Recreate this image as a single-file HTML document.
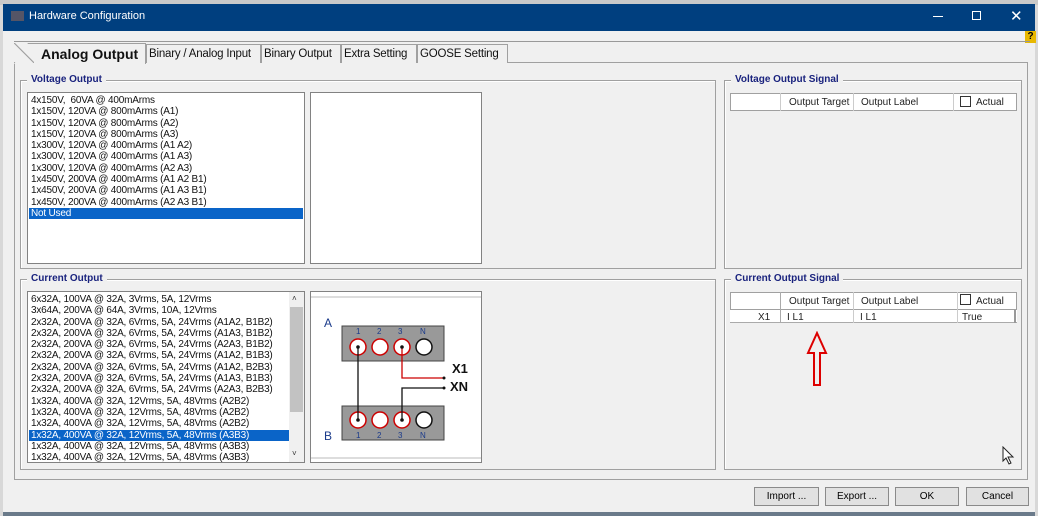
<!DOCTYPE html><html><head><style>
*{margin:0;padding:0;box-sizing:border-box}
body{width:1038px;height:516px;overflow:hidden;background:#d8d8d8;font-family:"Liberation Sans",sans-serif;position:relative}
.a{position:absolute}
.grp{position:absolute;border:1px solid #a0a0a0;box-shadow:inset 1px 1px #fff}
.gl{position:absolute;top:-7px;left:6px;background:#f0f0f0;color:#1a237e;font-weight:bold;font-size:10px;padding:0 4px}
.list{position:absolute;background:#fff;border:1px solid #828282;font-size:10px;line-height:11.3px;color:#111;padding:2px 1px;white-space:nowrap;overflow:hidden;letter-spacing:-0.2px}
.list div{padding-left:2px}
.sel{background:#0a64c8;color:#fff}
.tab{position:absolute;top:44px;height:19px;border:1px solid #a0a0a0;border-bottom:none;background:#f0f0f0;font-size:11.5px;padding:3px 2px;color:#111;white-space:nowrap;overflow:hidden;letter-spacing:-0.2px}
.btn{position:absolute;top:487px;height:19px;border:1px solid #8a8a8a;background:#e1e1e1;font-size:10px;text-align:center;line-height:17px}
.hdr{position:absolute;font-size:10px;color:#222;white-space:nowrap}
</style></head><body>
<div class="a" style="left:0;top:0;width:1038px;height:5px;background:#c9c9c9"></div>
<div class="a" style="left:3px;top:4px;width:1032px;height:512px;background:#f0f0f0"></div>
<div class="a" style="left:3px;top:4px;width:1032px;height:27px;background:#003f7f"></div>
<div class="a" style="left:11px;top:11px;width:13px;height:10px;background:#556"></div>
<div class="a" style="left:29px;top:10px;color:#fff;font-size:11px">Hardware Configuration</div>
<div class="a" style="left:933px;top:16px;width:10px;height:1px;background:#fff"></div>
<div class="a" style="left:972px;top:11px;width:9px;height:9px;border:1px solid #fff"></div>
<div class="a" style="left:1010px;top:7px;color:#fff;font-size:15px">✕</div>
<div class="a" style="left:1025px;top:31px;width:11px;height:12px;background:#e8b800;font-size:10px;font-weight:bold;text-align:center">?</div>
<div class="a" style="left:14px;top:41px;width:1016px;height:1px;background:#999"></div>
<div class="a" style="left:14px;top:62px;width:1014px;height:418px;border:1px solid #a0a0a0;background:#f0f0f0"></div>
<div class="a" style="left:14px;top:43px;width:132px;height:21px;background:#f0f0f0;border-top:1px solid #a0a0a0;border-right:1px solid #a0a0a0;clip-path:polygon(14px 0,100% 0,100% 100%,0 100%)"></div>
<div class="a" style="left:14px;top:43px;width:20px;height:20px;background:linear-gradient(to top right,transparent 48%,#a0a0a0 49%,#a0a0a0 52%,transparent 53%)"></div>
<div class="a" style="left:41px;top:46px;font-size:14px;font-weight:bold;color:#111;white-space:nowrap">Analog Output</div>
<div class="tab" style="left:146px;width:115px">Binary / Analog Input</div>
<div class="tab" style="left:261px;width:80px">Binary Output</div>
<div class="tab" style="left:341px;width:76px">Extra Setting</div>
<div class="tab" style="left:417px;width:91px">GOOSE Setting</div>

<div class="grp" style="left:20px;top:80px;width:696px;height:189px"><div class="gl">Voltage Output</div></div>
<div class="list" style="left:27px;top:92px;width:278px;height:172px">
<div>4x150V,&nbsp; 60VA @ 400mArms</div><div>1x150V, 120VA @ 800mArms (A1)</div><div>1x150V, 120VA @ 800mArms (A2)</div><div>1x150V, 120VA @ 800mArms (A3)</div><div>1x300V, 120VA @ 400mArms (A1 A2)</div><div>1x300V, 120VA @ 400mArms (A1 A3)</div><div>1x300V, 120VA @ 400mArms (A2 A3)</div><div>1x450V, 200VA @ 400mArms (A1 A2 B1)</div><div>1x450V, 200VA @ 400mArms (A1 A3 B1)</div><div>1x450V, 200VA @ 400mArms (A2 A3 B1)</div><div class="sel">Not Used</div></div>
<div class="a" style="left:310px;top:92px;width:172px;height:172px;background:#fff;border:1px solid #828282"></div>

<div class="grp" style="left:724px;top:80px;width:298px;height:189px"><div class="gl">Voltage Output Signal</div></div>
<div class="a" style="left:730px;top:93px;width:287px;height:18px;background:#fff;border:1px solid #a0a0a0"></div>
<div class="a" style="left:780px;top:93px;width:1px;height:18px;background:#ccc"></div>
<div class="a" style="left:853px;top:93px;width:1px;height:18px;background:#ccc"></div>
<div class="a" style="left:953px;top:93px;width:1px;height:18px;background:#ccc"></div>
<div class="hdr" style="left:789px;top:97px">Output Target</div>
<div class="hdr" style="left:861px;top:97px">Output Label</div>
<div class="a" style="left:960px;top:96px;width:11px;height:11px;border:1px solid #333;background:#fff"></div>
<div class="hdr" style="left:976px;top:97px">Actual</div>

<div class="grp" style="left:20px;top:279px;width:696px;height:191px"><div class="gl">Current Output</div></div>
<div class="list" style="left:27px;top:291px;width:278px;height:172px">
<div>6x32A, 100VA @ 32A, 3Vrms, 5A, 12Vrms</div><div>3x64A, 200VA @ 64A, 3Vrms, 10A, 12Vrms</div><div>2x32A, 200VA @ 32A, 6Vrms, 5A, 24Vrms (A1A2, B1B2)</div><div>2x32A, 200VA @ 32A, 6Vrms, 5A, 24Vrms (A1A3, B1B2)</div><div>2x32A, 200VA @ 32A, 6Vrms, 5A, 24Vrms (A2A3, B1B2)</div><div>2x32A, 200VA @ 32A, 6Vrms, 5A, 24Vrms (A1A2, B1B3)</div><div>2x32A, 200VA @ 32A, 6Vrms, 5A, 24Vrms (A1A2, B2B3)</div><div>2x32A, 200VA @ 32A, 6Vrms, 5A, 24Vrms (A1A3, B1B3)</div><div>2x32A, 200VA @ 32A, 6Vrms, 5A, 24Vrms (A2A3, B2B3)</div><div>1x32A, 400VA @ 32A, 12Vrms, 5A, 48Vrms (A2B2)</div><div>1x32A, 400VA @ 32A, 12Vrms, 5A, 48Vrms (A2B2)</div><div>1x32A, 400VA @ 32A, 12Vrms, 5A, 48Vrms (A2B2)</div><div class="sel" style="width:260px">1x32A, 400VA @ 32A, 12Vrms, 5A, 48Vrms (A3B3)</div><div>1x32A, 400VA @ 32A, 12Vrms, 5A, 48Vrms (A3B3)</div><div>1x32A, 400VA @ 32A, 12Vrms, 5A, 48Vrms (A3B3)</div></div>
<div class="a" style="left:289px;top:292px;width:15px;height:170px;background:#f0f0f0"></div>
<div class="a" style="left:290px;top:307px;width:13px;height:105px;background:#c2c2c2"></div>
<div class="a" style="left:292px;top:294px;font-size:8px;color:#333">˄</div>
<div class="a" style="left:292px;top:449px;font-size:8px;color:#333">˅</div>

<svg class="a" style="left:310px;top:291px" width="172" height="172" viewBox="0 0 172 172">
<rect x="0.5" y="0.5" width="171" height="171" fill="#fff" stroke="#828282"/>
<line x1="1" y1="6" x2="171" y2="6" stroke="#bbb"/>
<line x1="1" y1="167" x2="171" y2="167" stroke="#bbb"/>
<rect x="32" y="35" width="102" height="35" fill="#999" stroke="#444"/>
<rect x="32" y="115" width="102" height="34" fill="#999" stroke="#444"/>
<g font-size="8" fill="#1a3a8a" font-family="Liberation Sans"><text x="46" y="43">1</text><text x="67" y="43">2</text><text x="88" y="43">3</text><text x="110" y="43">N</text>
<text x="46" y="147">1</text><text x="67" y="147">2</text><text x="88" y="147">3</text><text x="110" y="147">N</text></g>
<g stroke-width="1.5" fill="#fff"><circle cx="48" cy="56" r="8" stroke="#c00"/><circle cx="70" cy="56" r="8" stroke="#c00"/><circle cx="92" cy="56" r="8" stroke="#c00"/><circle cx="114" cy="56" r="8" stroke="#111"/>
<circle cx="48" cy="129" r="8" stroke="#c00"/><circle cx="70" cy="129" r="8" stroke="#c00"/><circle cx="92" cy="129" r="8" stroke="#c00"/><circle cx="114" cy="129" r="8" stroke="#111"/></g>
<line x1="48" y1="56" x2="48" y2="129" stroke="#111" stroke-width="1.3"/>
<polyline points="92,56 92,87 134,87" fill="none" stroke="#c00" stroke-width="1.3"/>
<polyline points="92,129 92,97 134,97" fill="none" stroke="#111" stroke-width="1.3"/>
<circle cx="48" cy="56" r="1.8" fill="#111"/><circle cx="92" cy="56" r="1.8" fill="#111"/><circle cx="48" cy="129" r="1.8" fill="#111"/><circle cx="92" cy="129" r="1.8" fill="#111"/><circle cx="134" cy="87" r="1.5" fill="#111"/><circle cx="134" cy="97" r="1.5" fill="#111"/>
<g font-family="Liberation Sans" font-size="12" fill="#1a3a8a"><text x="14" y="36">A</text><text x="14" y="149">B</text></g>
<g font-family="Liberation Sans" font-size="13" font-weight="bold" fill="#111"><text x="142" y="82">X1</text><text x="140" y="100">XN</text></g>
</svg>

<div class="grp" style="left:724px;top:279px;width:298px;height:191px"><div class="gl">Current Output Signal</div></div>
<div class="a" style="left:730px;top:292px;width:287px;height:18px;background:#fff;border:1px solid #a0a0a0"></div>
<div class="a" style="left:730px;top:310px;width:287px;height:13px;background:#fff;border-bottom:1px solid #aaa"></div>
<div class="a" style="left:780px;top:292px;width:1px;height:31px;background:#aaa"></div>
<div class="a" style="left:853px;top:292px;width:1px;height:31px;background:#ccc"></div>
<div class="a" style="left:957px;top:292px;width:1px;height:31px;background:#ccc"></div>
<div class="a" style="left:1014px;top:310px;width:2px;height:13px;background:#999"></div>
<div class="hdr" style="left:789px;top:296px">Output Target</div>
<div class="hdr" style="left:861px;top:296px">Output Label</div>
<div class="a" style="left:960px;top:294px;width:11px;height:11px;border:1px solid #333;background:#fff"></div>
<div class="hdr" style="left:976px;top:296px">Actual</div>
<div class="hdr" style="left:758px;top:312px">X1</div>
<div class="hdr" style="left:787px;top:312px">I L1</div>
<div class="hdr" style="left:860px;top:312px">I L1</div>
<div class="hdr" style="left:962px;top:312px">True</div>
<svg class="a" style="left:806px;top:331px" width="22" height="56"><polygon points="11,2 20,22 14,22 14,54 8,54 8,22 2,22" fill="none" stroke="#d00" stroke-width="2"/></svg>
<svg class="a" style="left:1002px;top:446px" width="14" height="20"><polygon points="1,1 1,15 4,12 7,18 9,17 6,11 11,11" fill="#fff" stroke="#222"/></svg>

<div class="btn" style="left:754px;width:65px">Import ...</div>
<div class="btn" style="left:825px;width:64px">Export ...</div>
<div class="btn" style="left:895px;width:64px">OK</div>
<div class="btn" style="left:966px;width:63px">Cancel</div>
<div class="a" style="left:3px;top:512px;width:1032px;height:4px;background:#6a7a8a"></div>
</body></html>
